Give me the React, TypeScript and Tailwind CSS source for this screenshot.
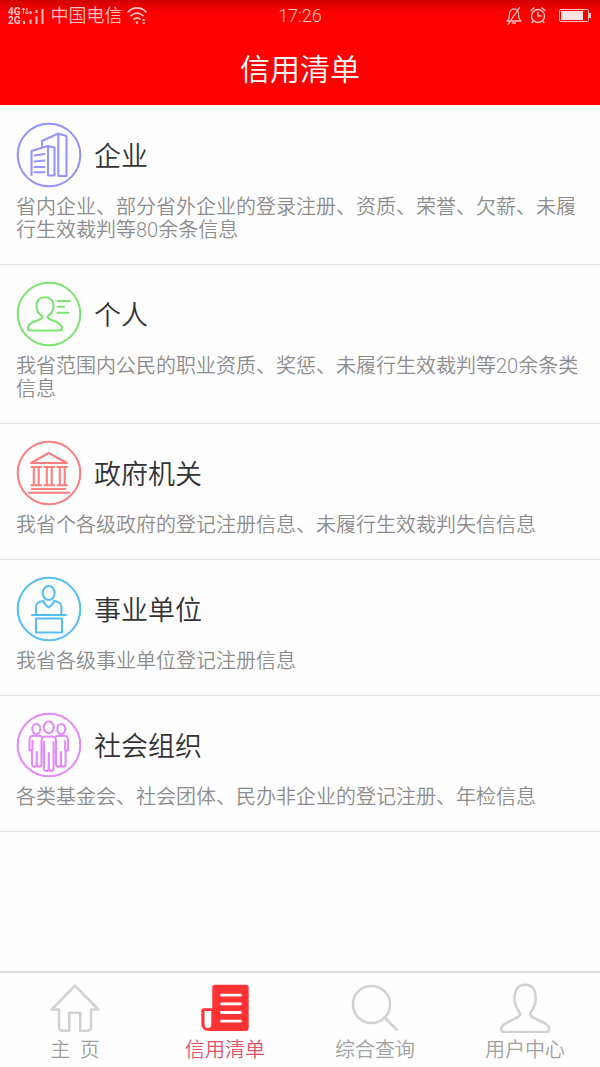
import type { ReactNode } from 'react';

interface CreditItem {
    title: string;
    desc: string;
    color: string;
    icon: ReactNode;
}

const items: CreditItem[] = [
    {
        title: '企业',
        desc: '省内企业、部分省外企业的登录注册、资质、荣誉、欠薪、未履行生效裁判等80余条信息',
        color: 'text-[#9494fc]',
        icon: (
            <>
                <path d="M15.5 53V29l16-5 7 1.5v28H32V24" />
                <path d="M26 24v-5l16.300-7.500 8.200 2.500v40h-8.200V11.500" />
                <path d="M18.500 33.500l10-1.500M18.500 39.500l10-1M18.500 45h10M18.500 50.300h10" />
            </>
        ),
    },
    {
        title: '个人',
        desc: '我省范围内公民的职业资质、奖惩、未履行生效裁判等20余条类信息',
        color: 'text-[#7be570]',
        icon: (
            <>
                <path d="M26.500 35.500C22.500 33 20.500 29.500 20.500 25c0-5.500 3.300-8.800 8.500-8.800s8.500 3.300 8.500 8.800c0 4.500-2 8-6 10.500 0 2 1.500 2.500 4 3.500 6 2.300 10.500 4 10.500 8 0 1.800-1 2.500-2.500 2.500h-29c-1.500 0-2.500-.7-2.500-2.500 0-4 4.500-5.700 10.500-8 2.500-1 4-1.500 4-3.500z" />
                <path d="M41.500 20H54M41.500 25.800h6.500M41.500 31.800h11" />
            </>
        ),
    },
    {
        title: '政府机关',
        desc: '我省个各级政府的登记注册信息、未履行生效裁判失信信息',
        color: 'text-[#fc7f7f]',
        icon: (
            <>
                <path d="M15 23l17.700-10L51 23z" />
                <path d="M15.500 27h9.500M28.500 27h9.500M41.500 27h9.500M15.500 45.200h9.500M28.500 45.200h9.500M41.500 45.200h9.500" />
                <path d="M17.800 27v18M22.700 27v18M30.800 27v18M35.700 27v18M43.800 27v18M48.700 27v18" />
                <path d="M16 49h33.500M13 52.800h40.500" />
            </>
        ),
    },
    {
        title: '事业单位',
        desc: '我省各级事业单位登记注册信息',
        color: 'text-[#55befa]',
        icon: (
            <>
                <ellipse cx="32.700" cy="17" rx="6" ry="7" />
                <path d="M20 38v-7c0-3.500 3-5.500 7.500-6 .5 3 2.500 4.500 5.200 6.500 2.700-2 4.700-3.500 5.200-6.500 4.500.5 7.500 2.500 7.500 6v7" />
                <path d="M16 39h34M20 42.500h26v14H20z" />
            </>
        ),
    },
    {
        title: '社会组织',
        desc: '各类基金会、社会团体、民办非企业的登记注册、年检信息',
        color: 'text-[#e28afc]',
        icon: (
            <>
                <ellipse cx="20.300" cy="17" rx="4" ry="5" />
                <ellipse cx="45.300" cy="17" rx="4" ry="5" />
                <ellipse cx="32.800" cy="15.300" rx="4.800" ry="5.800" />
                <path d="M25.500 24.300c-1.500-.6-3-.8-5-.3-2.500-.5-4-.5-5.500.3-1.200.7-1.500 2-1.500 3.700v10.500H16V52c0 3.500 4.700 3.500 4.700 0V40v12c0 3.500 4.800 3.500 4.800 0V41M16.500 38V29" />
                <path d="M40.100 24.300c1.500-.6 3-.8 5-.3 2.500-.5 4-.5 5.500.3 1.200.7 1.500 2 1.500 3.700v10.500h-2.500V52c0 3.500-4.700 3.500-4.700 0V40v12c0 3.500-4.800 3.500-4.800 0V41M49.100 38V29" />
                <path d="M32.800 24.800c-3-.6-4.500-.5-5.800.4s-1.500 2-1.500 4.300V40H28v16c0 4 4.800 4 4.800 0V41v15c0 4 4.800 4 4.800 0V40h2.500V29.500c0-2.300-.2-3.400-1.500-4.300s-2.800-1-5.800-.4zM28 40V30M37.600 40V30" />
            </>
        ),
    },
];

const tabs = [
    {
        label: '主\u00a0\u00a0页',
        active: false,
        icon: <path d="M26 2.700L2.700 26.500H10V44c0 2.500 1 3.700 3.500 3.700h6.800v-18h11v18h6.800c2.500 0 4-1.200 4-3.700V26.500h7.200z" />,
    },
    {
        label: '信用清单',
        active: true,
        icon: (
            <>
                <path
                    d="M16 1.700h31c1.800 0 2.700 1 2.700 2.700v40c0 2.400-1.200 3.600-3.500 3.600H10c-5 0-7.700-3-7.700-7.500V28c0-1.800.9-2.700 2.700-2.700h8.300V4.400c0-1.700.9-2.700 2.700-2.700z"
                    fill="currentColor"
                    stroke="none"
                />
                <path d="M5.500 28h6.800v13c0 2.800-1.500 4.300-3.400 4.300S5.500 43.800 5.500 41z" fill="#fff" stroke="none" />
                <path d="M22.500 12.200h19M22.500 20.800h19M22.500 29.500h19M22.500 38.200h19" stroke="#fff" strokeWidth="2.800" />
            </>
        ),
    },
    {
        label: '综合查询',
        active: false,
        icon: (
            <>
                <circle cx="22.500" cy="21.500" r="18.500" />
                <path d="M35.500 34.500L47.500 46.500" />
            </>
        ),
    },
    {
        label: '用户中心',
        active: false,
        icon: (
            <path d="M20.700 29.500c-3.200-4-5.200-8.500-5.200-14C15.500 7 19 1.800 26 1.800S36.700 7 36.700 15.500c0 5.500-2 10-5.200 14-.8 2.200-.3 3.300 1.700 4.500l11 5.500c5 2.500 6 3.700 6 6v.5c0 2.200-.8 3-2.800 3H5.100c-2 0-2.800-.8-2.800-3v-.5c0-2.300 1-3.500 6-6l10.700-5.500c2-1.200 2.500-2.300 1.700-4.500z" />
        ),
    },
];

function StatusBar() {
    return (
        <div className="grid h-8 grid-cols-3 items-center bg-linear-to-b from-[#cf0000] to-[#ff0000] to-40% px-2 text-lg leading-8 text-[#ffc4c4]">
            <div className="flex items-center">
                <div className="text-[10px] leading-[9px] font-bold">
                    <div>4G</div>
                    <div>2G</div>
                </div>
                {/* Data arrows and signal bars */}
                <svg className="h-5 w-6 shrink-0" viewBox="0 0 24 20" fill="none" stroke="currentColor" strokeWidth="2">
                    <path d="M2.500 8V2M.8 4l1.700-2 1.700 2M6 2v6M4.500 6L6 8l1.500-2" strokeWidth="1" />
                    <path d="M3 15v3M9.500 13.500v4.500M15.500 10.500v7.500M21.500 3v15" />
                    <path d="M9.500 5v3M15.500 4v3" />
                </svg>
                <span className="ml-1.5 whitespace-nowrap">中国电信</span>
                <svg className="ml-1 h-5 w-5 shrink-0" viewBox="0 0 20 20" fill="none" stroke="currentColor" strokeWidth="1.600" strokeLinecap="round">
                    <path d="M1 6c5-5.500 13-5.500 18 0M4 9.700c3.500-3.500 8.500-3.500 12 0M7 13.200c2-1.800 4-1.800 6 0" />
                    <circle cx="10" cy="16.500" r="1.300" fill="currentColor" stroke="none" />
                    <path d="M16 14h1.500M16 17h1.500" />
                </svg>
            </div>
            <div className="text-center">17:26</div>
            <div className="flex items-center justify-end gap-1">
                <svg className="h-5 w-5" viewBox="0 0 20 20" fill="none" stroke="currentColor" strokeWidth="1.300" strokeLinecap="round" strokeLinejoin="round">
                    <path d="M3 15c2-1.500 2.500-4 2.500-7 0-3 2-5 4.500-5s4.500 2 4.500 5c0 3 .5 5.500 2.500 7zM8.500 17h3M15.500 1.500L4 18.500" />
                </svg>
                <svg className="h-5 w-5" viewBox="0 0 20 20" fill="none" stroke="currentColor" strokeWidth="1.400" strokeLinecap="round">
                    <circle cx="10" cy="10" r="6.500" />
                    <path d="M10 6.500V10h3M3 4.500L6 2M17 4.500L14 2M5.500 15L4 16.500M14.500 15l1.500 1.500" />
                </svg>
                <svg className="ml-1.5 h-4 w-[34px]" viewBox="0 0 34 16" fill="none" stroke="currentColor">
                    <rect x="1.500" y="1.500" width="29" height="12" rx="1" />
                    <rect x="3" y="3" width="22" height="9" fill="#ffe2e2" stroke="none" />
                    <rect x="31" y="5" width="2" height="5" fill="currentColor" stroke="none" />
                </svg>
            </div>
        </div>
    );
}

export default function App() {
    return (
        <div className="flex min-h-screen flex-col bg-[#fefefe] font-['Roboto','Noto_Sans_CJK_SC',sans-serif] font-[350]" lang="zh-CN">
            <header className="bg-[#ff0000]">
                <StatusBar />
                <h1 className="pt-[18px] pb-[15px] text-center text-3xl leading-10 text-white">信用清单</h1>
            </header>

            <main className="flex-1">
                <ul className="pt-px">
                    {items.map((item) => (
                        <li key={item.title} className="border-b border-[#dedede]">
                            <a href="#" className="block px-4 pt-4 pb-[22px]">
                                <div className="mb-2 flex items-center gap-3">
                                    <svg
                                        className={`size-[66px] shrink-0 ${item.color}`}
                                        viewBox="0 0 66 66"
                                        fill="none"
                                        stroke="currentColor"
                                        strokeWidth="2.100"
                                        strokeLinecap="round"
                                        strokeLinejoin="round"
                                    >
                                        <circle cx="33" cy="33" r="31.300" />
                                        {item.icon}
                                    </svg>
                                    <h2 className="pt-1 text-[27px] leading-8 text-[#333]">{item.title}</h2>
                                </div>
                                <p className="text-xl leading-[23px] text-[#8c8c8c]">{item.desc}</p>
                            </a>
                        </li>
                    ))}
                </ul>
            </main>

            <nav className="grid grid-cols-4 border-t-2 border-[#dcdcdc]">
                {tabs.map((tab) => (
                    <a
                        key={tab.label}
                        href="#"
                        className={`flex flex-col items-center gap-[5px] pt-2.5 pb-[5px] ${tab.active ? 'text-[#e8506a]' : 'text-[#a0a0a0]'}`}
                    >
                        <svg
                            className={`h-[50px] w-[52px] ${tab.active ? 'text-[#ff3333]' : 'text-[#d2d2d2]'}`}
                            viewBox="0 0 52 50"
                            fill="none"
                            stroke="currentColor"
                            strokeWidth="2.600"
                            strokeLinecap="round"
                            strokeLinejoin="round"
                        >
                            {tab.icon}
                        </svg>
                        <span className="text-xl leading-6">{tab.label}</span>
                    </a>
                ))}
            </nav>
        </div>
    );
}
